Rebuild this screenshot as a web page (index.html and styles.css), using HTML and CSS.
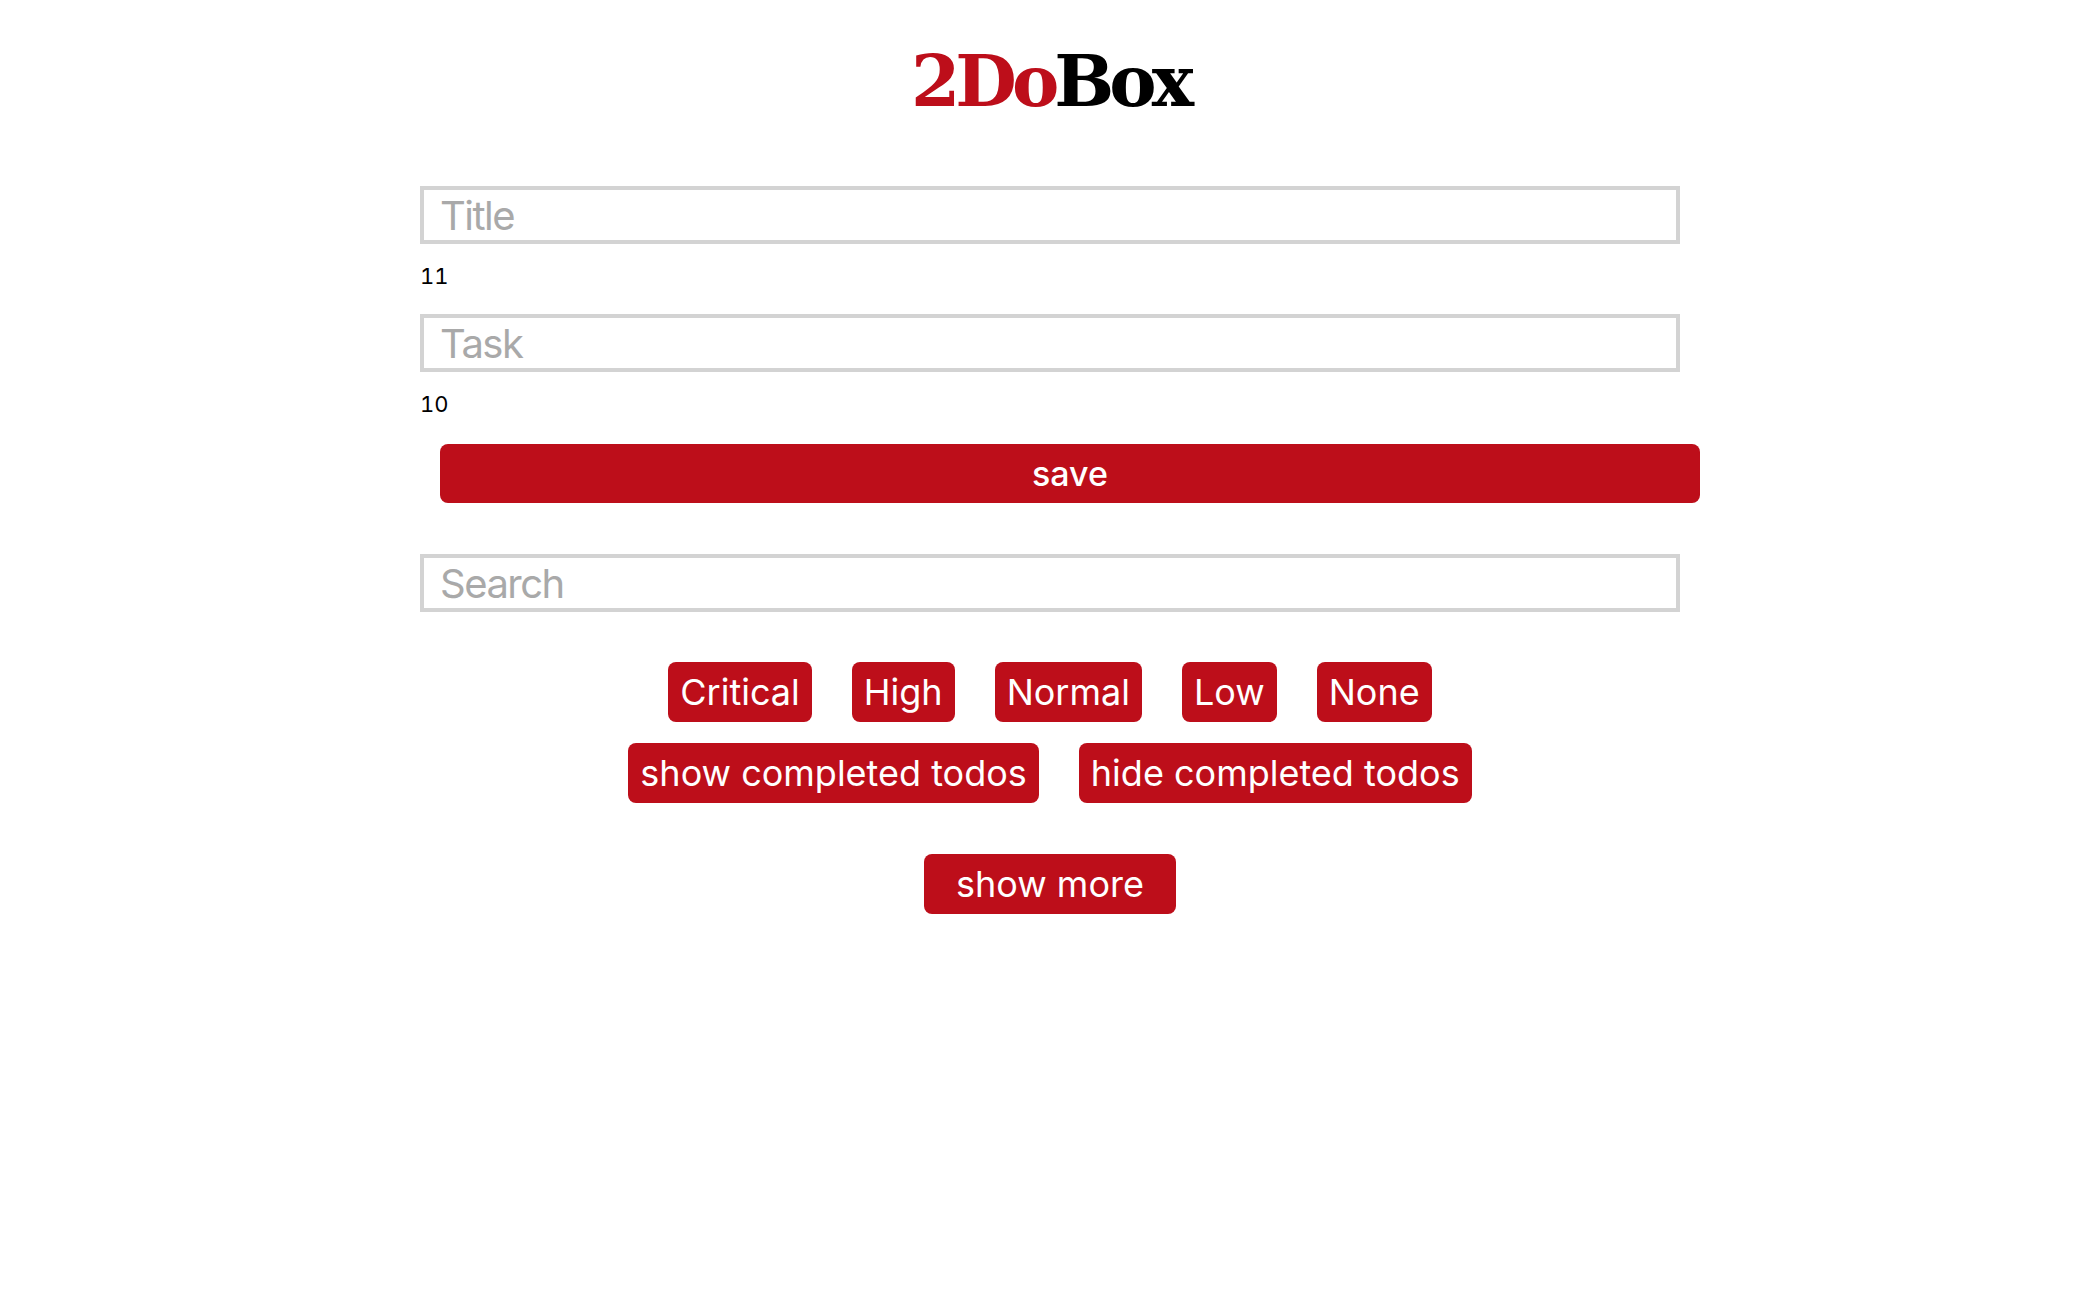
FILE: index.html
```html
<!DOCTYPE html>
<html lang="en">
<head>
<meta charset="utf-8">
<title>2DoBox</title>
<link rel="stylesheet" href="styles.css">
</head>
<body>
<header class="header">
  <h1 class="logo"><span class="logo-red">2Do</span><span class="logo-black">Box</span></h1>
</header>
<main class="main">
  <form class="form">
    <input class="field" type="text" placeholder="Title">
    <p class="counter">11</p>
    <input class="field field-task" type="text" placeholder="Task">
    <p class="counter">10</p>
    <button class="save-btn" type="button">save</button>
    <input class="field field-search" type="text" placeholder="Search">
  </form>
  <div class="btn-row row-priority">
    <button class="btn" type="button">Critical</button>
    <button class="btn" type="button">High</button>
    <button class="btn" type="button">Normal</button>
    <button class="btn" type="button">Low</button>
    <button class="btn" type="button">None</button>
  </div>
  <div class="btn-row row-completed">
    <button class="btn" type="button">show completed todos</button>
    <button class="btn" type="button">hide completed todos</button>
  </div>
  <div class="btn-row row-more">
    <button class="btn btn-more" type="button">show more</button>
  </div>
</main>
</body>
</html>
```

FILE: styles.css
```css
html, body {
  margin: 0;
  padding: 0;
  background: #ffffff;
}

body {
  font-family: Inter, "Liberation Sans", Arial, sans-serif;
  color: #000000;
}

.header {
  display: flex;
  justify-content: center;
}

.logo {
  margin: 42px 0 0 0;
  font-family: "DejaVu Serif", serif;
  font-weight: bold;
  font-size: 71px;
  line-height: 78px;
  letter-spacing: -5px;
}

.logo-red {
  color: #bd0e1a;
}

.logo-black {
  color: #000000;
}

.main {
  display: flex;
  flex-direction: column;
  align-items: center;
}

.form {
  width: 1260px;
  margin-top: 66px;
  display: flex;
  flex-direction: column;
  align-items: flex-start;
}

.field {
  box-sizing: border-box;
  width: 1260px;
  height: 58px;
  margin: 0;
  border: 4px solid #d3d3d3;
  border-radius: 0;
  padding: 0 16px;
  font-family: Inter, "Liberation Sans", Arial, sans-serif;
  font-size: 40px;
  letter-spacing: -1.5px;
  color: #000000;
  outline: none;
}

.field::placeholder {
  color: #a9a9a9;
}

.field-task {
  margin-top: 25px;
}

.counter {
  margin: 20px 0 0 0;
  font-size: 22px;
  line-height: 25px;
  font-feature-settings: "tnum" 1;
}

.save-btn {
  box-sizing: border-box;
  width: 1260px;
  height: 59px;
  margin: 27px 0 0 20px;
  border: none;
  border-radius: 8px;
  background: #bd0e1a;
  color: #ffffff;
  font-family: Inter, "Liberation Sans", Arial, sans-serif;
  font-size: 34px;
  font-weight: 500;
  padding: 0;
  cursor: pointer;
}

.field-search {
  margin-top: 51px;
}

.btn-row {
  display: flex;
  justify-content: center;
  gap: 40px;
}

.row-priority {
  margin-top: 50px;
}

.row-completed {
  margin-top: 21px;
}

.row-more {
  margin-top: 51px;
}

.btn {
  box-sizing: border-box;
  height: 60px;
  margin: 0;
  border: none;
  border-radius: 8px;
  background: #bd0e1a;
  color: #ffffff;
  font-family: Inter, "Liberation Sans", Arial, sans-serif;
  font-size: 36px;
  line-height: 44px;
  padding: 0 12px;
  cursor: pointer;
}

.btn-more {
  padding: 0 32px;
}
```
